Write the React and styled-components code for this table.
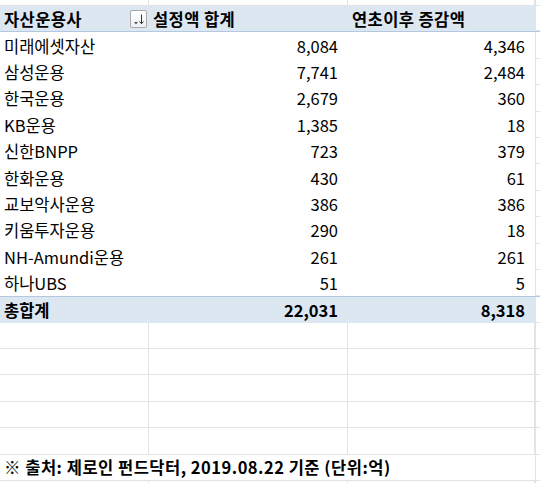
import React from 'react';
import styled, { createGlobalStyle } from 'styled-components';

const GlobalStyle = createGlobalStyle`
  html, body {
    margin: 0;
    padding: 0;
    background: #ffffff;
  }
  body {
    font-family: "Noto Sans CJK KR", "Noto Sans", sans-serif;
    color: #000;
  }
`;

const rows = [
  ['미래에셋자산', '8,084', '4,346'],
  ['삼성운용', '7,741', '2,484'],
  ['한국운용', '2,679', '360'],
  ['KB운용', '1,385', '18'],
  ['신한BNPP', '723', '379'],
  ['한화운용', '430', '61'],
  ['교보악사운용', '386', '386'],
  ['키움투자운용', '290', '18'],
  ['NH-Amundi운용', '261', '261'],
  ['하나UBS', '51', '5'],
];

const GRID = '#e3e3e3';
const BAND = '#dde7f2';
const BAND_LINE = '#b4c8e1';

export default function App() {
  return (
    <>
      <GlobalStyle />
      <Sheet>
        <Row $h={6}>
          <Cell $grid />
          <Cell $grid />
          <Cell $grid />
          <Edge />
        </Row>

        <Row $band>
          <HeadCell>
            자산운용사
            <SortButton aria-label="sort">
              <svg width="15" height="16" viewBox="0 0 15 16">
                <path d="M3 11 L7 11 L5 13.5 Z" fill="#555" />
                <path d="M10.5 3.5 V12.5 M8.5 10.5 L10.5 12.8 L12.5 10.5" stroke="#333" strokeWidth="1" fill="none" />
              </svg>
            </SortButton>
          </HeadCell>
          <HeadCell>설정액 합계</HeadCell>
          <HeadCell>연초이후 증감액</HeadCell>
          <Edge />
        </Row>

        {rows.map(([name, amount, change]) => (
          <Row key={name}>
            <Cell>{name}</Cell>
            <Cell $right>{amount}</Cell>
            <Cell $right>{change}</Cell>
            <Edge />
          </Row>
        ))}

        <Row $band $topLine>
          <Cell $bold>총합계</Cell>
          <Cell $right $bold>22,031</Cell>
          <Cell $right $bold>8,318</Cell>
          <Edge />
        </Row>

        {[0, 1, 2, 3, 4].map((i) => (
          <Row key={i}>
            <Cell $grid />
            <Cell $grid />
            <Cell $grid />
            <Edge />
          </Row>
        ))}

        <Row>
          <Note>※ 출처: 제로인 펀드닥터, 2019.08.22 기준 (단위:억)</Note>
          <Edge />
        </Row>

        <Row $h={10}>
          <Cell $grid />
          <Cell $grid />
          <Cell $grid />
          <Edge />
        </Row>
      </Sheet>
    </>
  );
}

const Sheet = styled.div`
  width: 540px;
  height: 483px;
  overflow: hidden;
  display: flex;
  flex-direction: column;
`;

const Row = styled.div`
  flex: none;
  display: grid;
  grid-template-columns: 149px 199px 187px 1fr;
  height: ${(p) => (p.$h ? `${p.$h}px` : '26.4px')};
  box-sizing: border-box;
  background: ${(p) => (p.$band ? BAND : '#fff')};
  border-top: ${(p) => (p.$topLine ? `1px solid ${BAND_LINE}` : 'none')};
  border-bottom: ${(p) => (p.$band && !p.$topLine ? `1px solid ${BAND_LINE}` : 'none')};
`;

const Cell = styled.div`
  display: flex;
  align-items: center;
  justify-content: ${(p) => (p.$right ? 'flex-end' : 'flex-start')};
  padding: ${(p) => (p.$right ? '0 10px 0 0' : '0 0 0 4px')};
  box-sizing: border-box;
  font-size: 16.5px;
  font-weight: ${(p) => (p.$bold ? 700 : 400)};
  white-space: nowrap;
  overflow: hidden;
  border-right: ${(p) => (p.$grid ? `1px solid ${GRID}` : 'none')};
  border-bottom: ${(p) => (p.$grid ? `1px solid ${GRID}` : 'none')};
`;

const HeadCell = styled(Cell)`
  font-weight: 700;
  letter-spacing: 0.4px;
  position: relative;
`;

const SortButton = styled.span`
  position: absolute;
  right: 2px;
  top: 4px;
  width: 17px;
  height: 18px;
  box-sizing: border-box;
  border: 1px solid #a9a9a9;
  border-radius: 2px;
  background: linear-gradient(#ffffff, #eef1f5);
  display: flex;
  align-items: center;
  justify-content: center;
`;

const Edge = styled.div`
  border-left: 1px solid ${GRID};
  border-bottom: 1px solid ${GRID};
  background: #fff;
`;

const Note = styled.div`
  grid-column: 1 / span 3;
  display: flex;
  align-items: center;
  padding-left: 4px;
  font-size: 16.5px;
  letter-spacing: 0.5px;
  font-weight: 700;
  white-space: nowrap;
  border-bottom: 1px solid ${GRID};
`;
